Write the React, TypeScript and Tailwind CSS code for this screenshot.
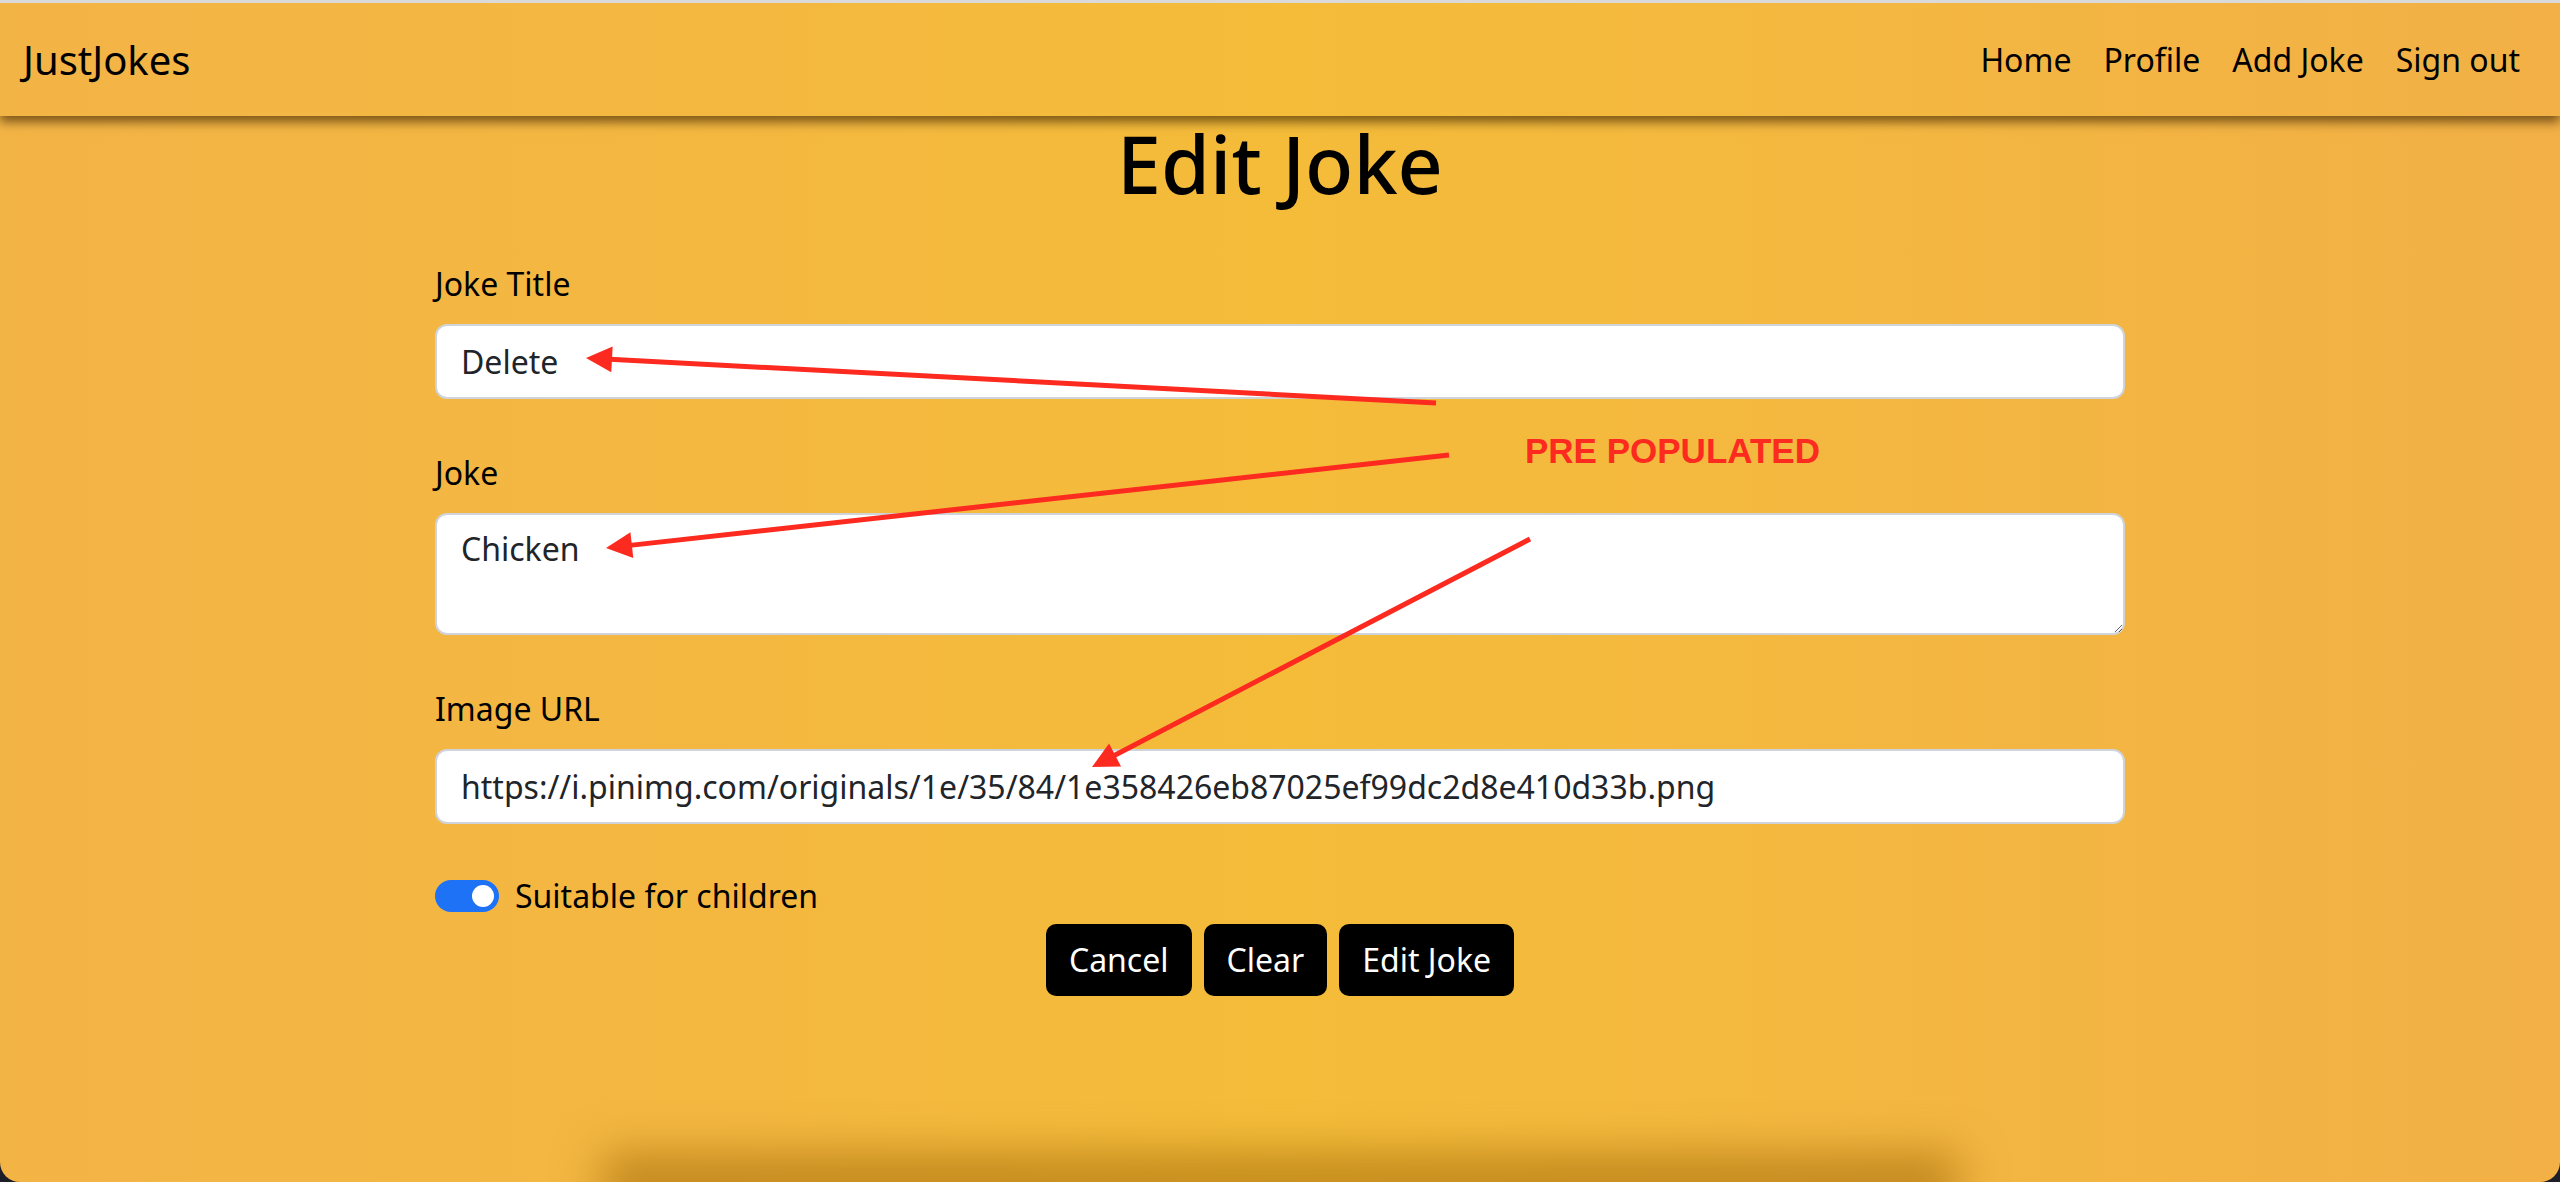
import React from "react";

type Arrow = { x1: number; y1: number; x2: number; y2: number };

const arrows: Arrow[] = [
  { x1: 1436, y1: 403, x2: 586, y2: 358 },
  { x1: 1449, y1: 455, x2: 606, y2: 548 },
  { x1: 1530, y1: 539, x2: 1092, y2: 767 },
];

function ArrowShape({ a }: { a: Arrow }) {
  const dx = a.x2 - a.x1;
  const dy = a.y2 - a.y1;
  const len = Math.sqrt(dx * dx + dy * dy);
  const ux = dx / len;
  const uy = dy / len;
  const headLen = 26;
  const headHalf = 13;
  const bx = a.x2 - ux * headLen;
  const by = a.y2 - uy * headLen;
  const px = -uy;
  const py = ux;
  const pts = `${a.x2},${a.y2} ${bx + px * headHalf},${by + py * headHalf} ${bx - px * headHalf},${by - py * headHalf}`;
  return (
    <g>
      <line x1={a.x1} y1={a.y1} x2={bx + ux * 2} y2={by + uy * 2} stroke="#fc2a1f" strokeWidth={5} />
      <polygon points={pts} fill="#fc2a1f" />
    </g>
  );
}

export default function App() {
  const grad = "bg-[linear-gradient(90deg,#f3b446_0%,#f4b840_30%,#f4bc39_50%,#f4b840_70%,#f2b046_100%)]";
  return (
    <div className="w-full h-[1182px] bg-[#1e1e28]" style={{ fontFamily: '"Noto Sans", sans-serif' }}>
      <div className={`relative h-full rounded-b-[20px] overflow-hidden flex flex-col border-t-[3px] border-[#dadada] ${grad}`}>
        <nav className={`relative z-10 h-[113px] shrink-0 flex items-center justify-between pl-[23px] pr-[24px] shadow-[0_6px_10px_rgba(60,35,0,0.65)] ${grad}`}>
          <span className="text-[40px] leading-none text-black">JustJokes</span>
          <div className="flex items-center text-[32px] text-black leading-none">
            <span className="px-[16px]">Home</span>
            <span className="px-[16px]">Profile</span>
            <span className="px-[16px]">Add Joke</span>
            <span className="px-[16px]">Sign out</span>
          </div>
        </nav>

        <h1 className="text-center text-[79px] leading-[96px] font-medium text-black">Edit Joke</h1>

        <form className="w-[1690px] mx-auto mt-[48px] flex flex-col text-[32px] leading-[48px] text-black">
          <label className="mb-[16px]">Joke Title</label>
          <input
            defaultValue="Delete"
            className="h-[75px] mb-[50px] bg-white border-2 border-[#ced4da] rounded-[12px] px-[24px] text-[32px] text-[#212529] outline-none"
          />
          <label className="mb-[16px]">Joke</label>
          <textarea
            defaultValue="Chicken"
            className="h-[122px] mb-[50px] bg-white border-2 border-[#ced4da] rounded-[12px] px-[24px] py-[10px] text-[32px] leading-[48px] text-[#212529] outline-none"
          />
          <label className="mb-[16px]">Image URL</label>
          <input
            defaultValue="https://i.pinimg.com/originals/1e/35/84/1e358426eb87025ef99dc2d8e410d33b.png"
            className="h-[75px] bg-white border-2 border-[#ced4da] rounded-[12px] px-[24px] text-[32px] text-[#212529] outline-none"
          />
          <div className="mt-[48px] flex items-center gap-[16px] h-[48px]">
            <div className="w-[64px] h-[32px] rounded-full bg-[#1d72f6] flex items-center justify-end pr-[5px]">
              <div className="w-[22px] h-[22px] rounded-full bg-white" />
            </div>
            <span>Suitable for children</span>
          </div>
          <div className="mt-[4px] flex justify-center gap-[12px]">
            <button type="button" className="h-[72px] px-[23px] bg-black text-white rounded-[10px] text-[32px]">Cancel</button>
            <button type="button" className="h-[72px] px-[23px] bg-black text-white rounded-[10px] text-[32px]">Clear</button>
            <button type="button" className="h-[72px] px-[23px] bg-black text-white rounded-[10px] text-[32px]">Edit Joke</button>
          </div>
        </form>

        <div className="flex-1" />
        <div className="mx-auto w-[1300px] h-0 shadow-[0_0_45px_28px_rgba(150,95,0,0.55)]" />

        <svg className="absolute left-0 top-[-3px] pointer-events-none" width={2560} height={1182}>
          {arrows.map((a, i) => (
            <ArrowShape key={i} a={a} />
          ))}
        </svg>
        <div
          className="absolute left-[1525px] top-[430px] text-[35px] font-bold leading-none text-[#fc2a1f]"
          style={{ fontFamily: '"Liberation Sans", Arial, sans-serif' }}
        >
          PRE POPULATED
        </div>
      </div>
    </div>
  );
}
